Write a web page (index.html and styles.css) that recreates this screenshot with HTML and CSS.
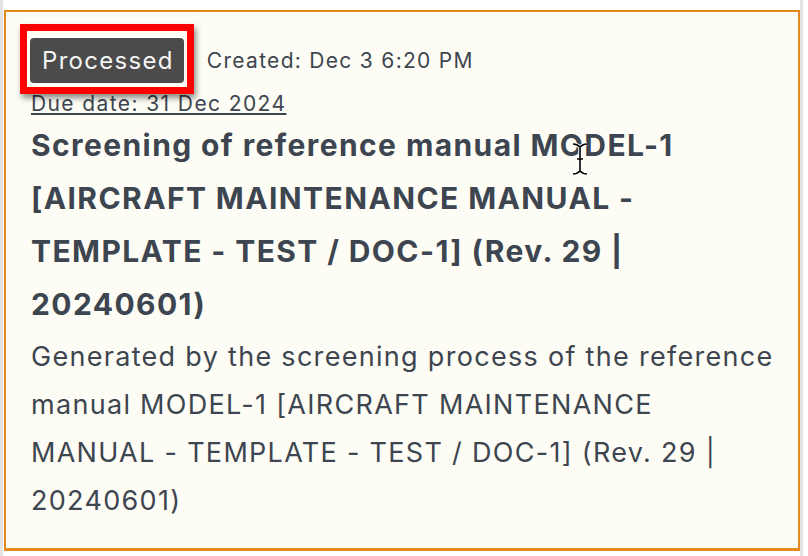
FILE: index.html
```html
<!DOCTYPE html>
<html lang="en">
<head>
    <meta charset="UTF-8">
    <meta name="viewport" content="width=device-width, initial-scale=1.0">
    <title>Task card</title>
    <link rel="stylesheet" href="styles.css">
</head>
<body>
    <div class="panel">
        <div class="card">
            <div class="card-head">
                <span class="badge">Processed</span>
                <span class="created">Created: Dec 3 6:20 PM</span>
            </div>
            <a href="#" class="due-date">Due date: 31 Dec 2024</a>
            <h2 class="title">Screening of reference manual MODEL-1 [AIRCRAFT MAINTENANCE MANUAL - TEMPLATE - TEST / DOC-1] (Rev. 29 | 20240601)</h2>
            <p class="description">Generated by the screening process of the reference manual MODEL-1 [AIRCRAFT MAINTENANCE MANUAL - TEMPLATE - TEST / DOC-1] (Rev. 29 | 20240601)</p>

            <!-- mouse cursor from the screenshot -->
            <svg class="cursor" width="18" height="34" viewBox="0 0 18 34">
                <path d="M2 2 q4 0 7 3 q3 -3 7 -3 M9 5 v24 M2 32 q4 0 7 -3 q3 3 7 3 M6 17 h6" fill="none" stroke="#fff" stroke-width="3.5"/>
                <path d="M2 2 q4 0 7 3 q3 -3 7 -3 M9 5 v24 M2 32 q4 0 7 -3 q3 3 7 3 M6 17 h6" fill="none" stroke="#000" stroke-width="1.6"/>
            </svg>
        </div>
    </div>
</body>
</html>
```

FILE: styles.css
```css
body {
    font-family: Inter, "Open Sans", sans-serif;
    margin: 0;
    padding: 0;
    background-color: #fff;
    color: #3d4550;
}
.panel {
    display: flex;
    flex-direction: column;
    width: 803px;
    height: 556px;
    border-left: 3px solid #e3e3e3;
    border-right: 3px solid #e3e3e3;
    padding: 10px 0 5px;
    box-sizing: border-box;
}
.card {
    position: relative;
    flex: 1;
    margin-left: 1px;
    background-color: #fdfdf5;
    border: 2px solid #e28b1c;
    border-bottom-width: 3px;
    padding: 26px 20px 0 25px;
}
.card-head {
    display: flex;
    align-items: center;
}
.badge {
    position: relative;
    display: inline-block;
    height: 45px;
    line-height: 45px;
    margin-left: -1px;
    padding: 0 10px 0 12px;
    background-color: #4b4b4b;
    color: #f4f4f4;
    font-size: 24px;
    letter-spacing: 1.3px;
    border-radius: 4px;
}
/* red highlight drawn over the badge */
.badge::after {
    content: "";
    position: absolute;
    left: -10px;
    right: -10px;
    top: -14px;
    bottom: -11px;
    border: 7px solid #f00;
    box-shadow: 2px 4px 6px rgba(0, 0, 0, 0.45);
}
.created {
    margin-left: 23px;
    font-size: 21px;
    letter-spacing: 1.3px;
}
.due-date {
    display: block;
    margin-top: 5px;
    font-size: 21px;
    line-height: 31px;
    letter-spacing: 1.4px;
    color: #3d4550;
}
.title {
    margin: 0;
    font-size: 30px;
    font-weight: 700;
    line-height: 53px;
    letter-spacing: 1.4px;
}
.description {
    margin: 2px 0 0;
    font-size: 27px;
    line-height: 48px;
    letter-spacing: 1.3px;
}
.cursor {
    position: absolute;
    left: 565px;
    top: 130px;
}
```
